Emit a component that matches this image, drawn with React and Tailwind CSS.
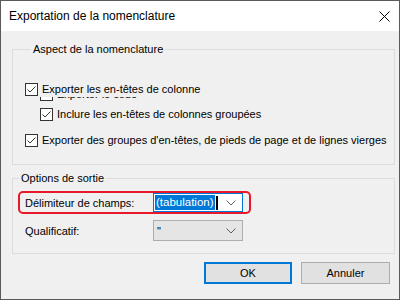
import React from 'react';

const Check = () => (
  <svg width="13" height="13" viewBox="0 0 13 13" className="shrink-0">
    <rect x="0.5" y="0.5" width="12" height="12" fill="#fff" stroke="#333" />
    <path d="M2.5 6.5 L5 9 L10.5 3.5" fill="none" stroke="#333" strokeWidth="1" />
  </svg>
);

const Chevron = () => (
  <svg width="10" height="6" viewBox="0 0 10 6" className="shrink-0">
    <path d="M0.5 0.5 L5 5 L9.5 0.5" fill="none" stroke="#606060" strokeWidth="1" />
  </svg>
);

const CheckRow = ({ label, className = '' }) => (
  <div className={`flex items-center h-4 gap-[4px] ${className}`}>
    <Check />
    <span className="leading-4 whitespace-nowrap">{label}</span>
  </div>
);

const App = () => {
  return (
    <div className="w-[400px] h-[300px] border border-[#5a5a5a] flex flex-col text-[11px] text-black font-['Liberation_Sans',Arial,sans-serif]">
      {/* barre de titre */}
      <div className="h-[30px] bg-white flex items-center justify-between pl-[8px] pr-[9px] shrink-0">
        <span className="leading-4 text-[12px]">Exportation de la nomenclature</span>
        <svg width="11" height="11" viewBox="0 0 11 11">
          <path d="M0.5 0.5 L10.5 10.5 M10.5 0.5 L0.5 10.5" stroke="#000" strokeWidth="1" />
        </svg>
      </div>

      <div className="flex-1 bg-[#f0f0f0] pl-[11px] pr-[4px] flex flex-col">
        <fieldset className="mt-[10px] border border-[#dcdcdc] pl-[12px] pt-[24px] pb-[16px]">
          <legend className="ml-[6px] px-[2px] leading-4">Aspect de la nomenclature</legend>
          <CheckRow label="Exporter les en-têtes de colonne" className="relative z-10 bg-[#f0f0f0] w-fit pr-[2px]" />
          {/* case masquée sous la précédente : seul le bas dépasse */}
          <div className="h-[4px] overflow-hidden ml-[15px]">
            <div className="-mt-[11px]">
              <CheckRow label="Exporter le code" />
            </div>
          </div>
          <CheckRow label="Inclure les en-têtes de colonnes groupées" className="mt-[5px] ml-[15px]" />
          <CheckRow label="Exporter des groupes d'en-têtes, de pieds de page et de lignes vierges" className="mt-[10px]" />
        </fieldset>

        <fieldset className="mt-[5px] border border-[#dcdcdc] pt-[5px] pb-[12px]">
          <legend className="ml-[6px] px-[2px] leading-4">Options de sortie</legend>
          <div className="ml-[5px] w-[233px] h-[23px] border-2 border-[#e8182a] rounded-[5px] flex items-center pl-[5px]">
            <span className="w-[128px] leading-4">Délimiteur de champs:</span>
            <div className="w-[90px] h-[19px] bg-white border border-[#0078d7] flex items-center pl-[1px] pr-[6px]">
              <span className="bg-[#0078d7] text-white text-[11.5px] leading-[15px] px-[1px]">(tabulation)</span>
              <span className="w-[2px] h-[14px] bg-black ml-[1px]"></span>
              <span className="flex-1"></span>
              <Chevron />
            </div>
          </div>
          <div className="mt-[6px] pl-[12px] flex items-center">
            <span className="w-[128px] leading-4">Qualificatif:</span>
            <div className="w-[90px] h-[21px] bg-[#e5e5e5] border border-[#adadad] flex items-center pl-[3px] pr-[6px]">
              <span className="leading-4">"</span>
              <span className="flex-1"></span>
              <Chevron />
            </div>
          </div>
        </fieldset>

        <div className="mt-[8px] flex justify-end gap-[9px] pr-[5px]">
          <button className="w-[88px] h-[22px] bg-[#e1e1e1] border-2 border-[#0078d7] leading-4">OK</button>
          <button className="w-[89px] h-[22px] bg-[#e1e1e1] border border-[#adadad] leading-4">Annuler</button>
        </div>
      </div>
    </div>
  );
};

export default App;
